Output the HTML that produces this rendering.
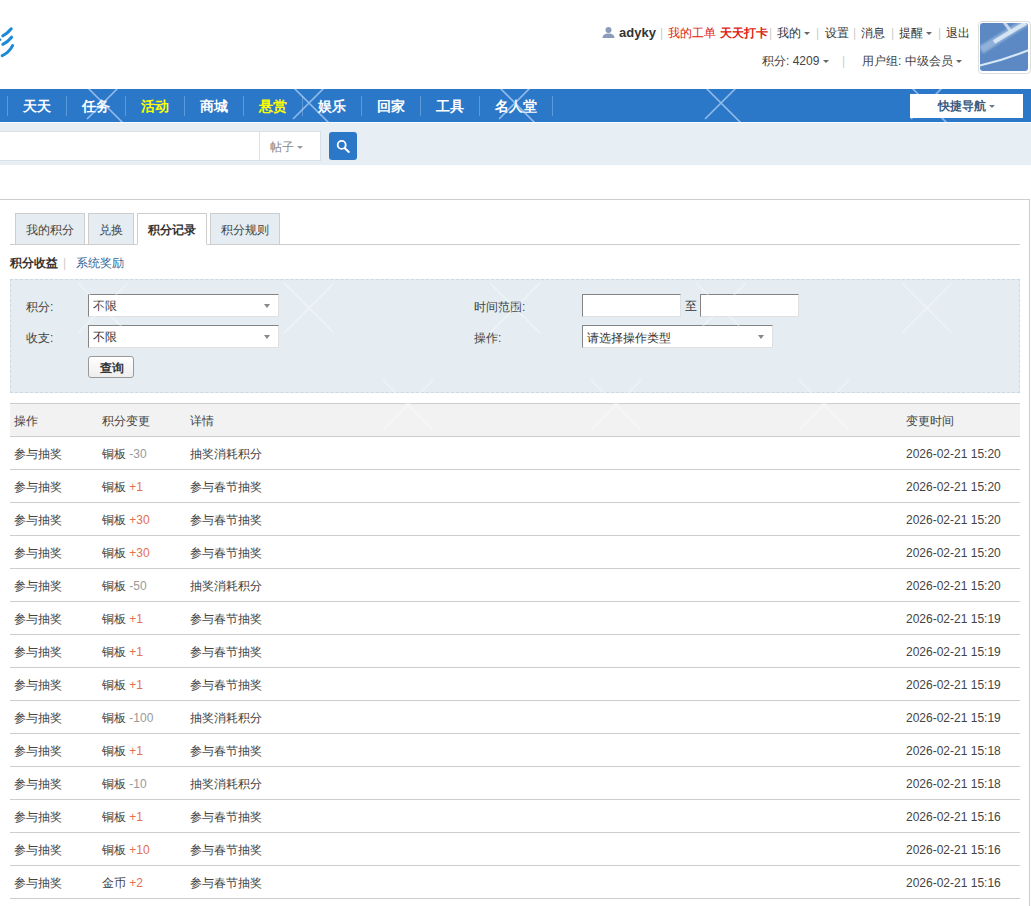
<!DOCTYPE html>
<html><head><meta charset="utf-8">
<style>
*{margin:0;padding:0;box-sizing:border-box}
html,body{width:1031px;height:906px;overflow:hidden;background:#fff}
body{font-family:"Liberation Sans",sans-serif;font-size:12px;color:#444;position:relative}
.a{position:absolute;white-space:nowrap;line-height:12px}
.caret{display:inline-block;width:0;height:0;border-left:3px solid transparent;border-right:3px solid transparent;border-top:3px solid #666;vertical-align:middle}
/* header */
#nav{position:absolute;left:0;top:89px;width:1031px;height:33px;background:#2b78c9}
#nav .sep{position:absolute;top:7px;width:1px;height:20px;background:#5a9ad8}
#nav .it{position:absolute;top:10px;font-size:14px;font-weight:bold;color:#fff;line-height:14px}
#srch{position:absolute;left:0;top:122px;width:1031px;height:43px;background:#e7eef4;border-top:1px solid #f6fbfd}
#content{position:absolute;left:-20px;top:199px;width:1050px;height:800px;border:1px solid #cdcdcd;background:#fff}
.tab{position:absolute;top:213px;height:32px;border:1px solid #cdcdcd;background:#e5edf2;color:#444;text-align:center;line-height:32px}
.tab.on{background:#fff;border-bottom-color:#fff;font-weight:bold;color:#333}
.px{position:absolute;background:#fff;border:1px solid;border-color:#848484 #e0e0e0 #e0e0e0 #848484}
.row{position:absolute;left:10px;width:1010px;height:33px;border-bottom:1px solid #cdcdcd}
.row span{position:absolute;top:11px;line-height:12px}
.g{color:#999}.r{color:#e4704f}
</style></head><body>

<!-- logo strokes -->
<svg class="a" style="left:0;top:0" width="30" height="70">
<g stroke="#1a8ad6" stroke-width="3" stroke-linecap="round" fill="none">
<path d="M2.8 35.8 Q7.5 33.5 11.2 28.8"/>
<path d="M2.8 44.3 Q7.8 42 11.6 37.2"/>
<path d="M2.2 55.6 Q9 52.5 12.6 45.6"/>
<path d="M-2 40.3 L0.3 39.7" stroke-width="2.4"/>
</g>
</svg>
<!-- user bar -->
<svg class="a" style="left:602px;top:27px" width="13" height="11" viewBox="0 0 13 11">
<circle cx="6.5" cy="3" r="3" fill="#8a9cb9"/>
<path d="M0.5 11 Q0.5 6.5 6.5 6.5 Q12.5 6.5 12.5 11Z" fill="#8a9cb9"/>
</svg>
<div class="a" style="left:619px;top:27px;font-weight:bold;color:#333;font-size:13px">adyky</div>
<div class="a" style="left:660px;top:27px;color:#ccc">|</div>
<div class="a" style="left:668px;top:27px;color:#d21">我的工单</div>
<div class="a" style="left:720px;top:27px;color:#d21;font-weight:bold">天天打卡</div>
<div class="a" style="left:769px;top:27px;color:#ccc">|</div>
<div class="a" style="left:777px;top:27px;color:#333">我的 <span class="caret"></span></div>
<div class="a" style="left:816px;top:27px;color:#ccc">|</div>
<div class="a" style="left:825px;top:27px;color:#333">设置</div>
<div class="a" style="left:853px;top:27px;color:#ccc">|</div>
<div class="a" style="left:861px;top:27px;color:#333">消息</div>
<div class="a" style="left:891px;top:27px;color:#ccc">|</div>
<div class="a" style="left:899px;top:27px;color:#333">提醒 <span class="caret"></span></div>
<div class="a" style="left:938px;top:27px;color:#ccc">|</div>
<div class="a" style="left:946px;top:27px;color:#333">退出</div>

<div class="a" style="left:762px;top:55px;color:#444">积分: 4209 <span class="caret"></span></div>
<div class="a" style="left:842px;top:55px;color:#ccc">|</div>
<div class="a" style="left:862px;top:55px;color:#444">用户组: 中级会员 <span class="caret"></span></div>

<!-- avatar -->
<div class="a" style="left:978px;top:21px;width:53px;height:53px;border:1px solid #ddd;border-radius:4px;background:#fff"></div>
<svg class="a" style="left:980px;top:23px" width="48" height="48" viewBox="0 0 48 48">
<defs><filter id="bl" x="-20%" y="-20%" width="140%" height="140%"><feGaussianBlur stdDeviation="1"/></filter>
<filter id="bl2" x="-20%" y="-20%" width="140%" height="140%"><feGaussianBlur stdDeviation="0.7"/></filter>
<clipPath id="ac"><rect width="48" height="48" rx="3"/></clipPath></defs>
<g clip-path="url(#ac)">
<rect width="48" height="48" fill="#5c89c3"/>
<path d="M1 27 Q20 15 46 -1" stroke="#b4cfea" stroke-width="8" fill="none" opacity="0.6" filter="url(#bl)"/>
<path d="M14 19 Q30 9 46 0" stroke="#e2eef8" stroke-width="4" fill="none" opacity="0.85" filter="url(#bl2)"/>
<path d="M24 -1 L32 10" stroke="#dbe8f3" stroke-width="3" fill="none" opacity="0.8" filter="url(#bl2)"/>
<path d="M-1 42.8 Q24 37 49 27" stroke="#d6e7f5" stroke-width="2" fill="none" filter="url(#bl2)"/>
</g>
</svg>

<!-- nav -->
<div id="nav">
<div class="sep" style="left:7px"></div>
<div class="it" style="left:23px;color:#fff">天天</div>
<div class="sep" style="left:66px"></div>
<div class="it" style="left:82px;color:#fff">任务</div>
<div class="sep" style="left:125px"></div>
<div class="it" style="left:141px;color:#ff0">活动</div>
<div class="sep" style="left:184px"></div>
<div class="it" style="left:200px;color:#fff">商城</div>
<div class="sep" style="left:243px"></div>
<div class="it" style="left:259px;color:#ff0">悬赏</div>
<div class="sep" style="left:302px"></div>
<div class="it" style="left:318px;color:#fff">娱乐</div>
<div class="sep" style="left:361px"></div>
<div class="it" style="left:377px;color:#fff">回家</div>
<div class="sep" style="left:420px"></div>
<div class="it" style="left:436px;color:#fff">工具</div>
<div class="sep" style="left:479px"></div>
<div class="it" style="left:495px;color:#fff">名人堂</div>
<div class="sep" style="left:552px"></div>
<div style="position:absolute;left:910px;top:5px;width:113px;height:24px;background:#fff"></div>
<div class="it" style="left:938px;top:11px;font-size:12px;line-height:12px;color:#3b5b80">快捷导航 <span class="caret" style="border-top-color:#6a7a8a"></span></div>
</div>

<div id="srch">
<div style="position:absolute;left:-10px;top:8px;width:331px;height:30px;border:1px solid #d9e1e8;background:#fff"></div>
<div style="position:absolute;left:259px;top:9px;width:1px;height:28px;background:#e0e0e0"></div>
<div class="a" style="left:270px;top:18px;color:#888">帖子 <span class="caret" style="border-top-color:#999"></span></div>
<div style="position:absolute;left:329px;top:9px;width:28px;height:28px;background:#2b78c9;border-radius:3px"></div>
<svg style="position:absolute;left:329px;top:9px" width="28" height="28" viewBox="0 0 28 28"><circle cx="12.7" cy="12.9" r="4" stroke="#fff" stroke-width="1.8" fill="none"/><path d="M15.6 15.9 L19.8 19.9" stroke="#fff" stroke-width="2.1" stroke-linecap="round"/></svg>
</div>
<div id="content"></div>
<div style="position:absolute;left:10px;top:244px;width:1010px;height:1px;background:#cdcdcd"></div>
<div class="tab" style="left:15px;width:70px">我的积分</div>
<div class="tab" style="left:88px;width:46px">兑换</div>
<div class="tab on" style="left:137px;width:70px">积分记录</div>
<div class="tab" style="left:210px;width:70px">积分规则</div>
<div class="a" style="left:10px;top:257px;font-weight:bold;color:#333">积分收益</div>
<div class="a" style="left:63px;top:257px;color:#ccc">|</div>
<div class="a" style="left:76px;top:257px;color:#336699">系统奖励</div>
<div style="position:absolute;left:10px;top:279px;width:1010px;height:114px;border:1px dashed #c9d9e5;background:#e5edf2"></div>
<div class="a" style="left:26px;top:301px">积分:</div>
<div class="a" style="left:26px;top:332px">收支:</div>
<div class="px" style="left:88px;top:294px;width:191px;height:23px"><span class="a" style="left:4px;top:5px;color:#333">不限</span><span class="caret" style="position:absolute;left:175px;top:9px;border-top-color:#888;border-width:4px 3.5px 0"></span></div>
<div class="px" style="left:88px;top:325px;width:191px;height:23px"><span class="a" style="left:4px;top:5px;color:#333">不限</span><span class="caret" style="position:absolute;left:175px;top:9px;border-top-color:#888;border-width:4px 3.5px 0"></span></div>
<div style="position:absolute;left:88px;top:356px;width:46px;height:22px;border:1px solid #999;border-radius:3px;background:linear-gradient(#fff,#eee)"></div>
<div class="a" style="left:100px;top:362px;font-weight:bold;color:#333">查询</div>
<div class="a" style="left:474px;top:301px">时间范围:</div>
<div class="a" style="left:474px;top:332px">操作:</div>
<div class="px" style="left:582px;top:294px;width:99px;height:23px"></div>
<div class="a" style="left:685px;top:300px;color:#333">至</div>
<div class="px" style="left:700px;top:294px;width:99px;height:23px"></div>
<div class="px" style="left:582px;top:325px;width:191px;height:23px"><span class="a" style="left:4px;top:6px;color:#333">请选择操作类型</span><span class="caret" style="position:absolute;left:175px;top:9px;border-top-color:#888;border-width:4px 3.5px 0"></span></div>
<div style="position:absolute;left:10px;top:403px;width:1010px;height:34px;border-top:1px solid #cdcdcd;border-bottom:1px solid #cdcdcd;background:#f2f2f2"></div>
<div class="a" style="left:14px;top:415px">操作</div>
<div class="a" style="left:102px;top:415px">积分变更</div>
<div class="a" style="left:190px;top:415px">详情</div>
<div class="a" style="left:906px;top:415px">变更时间</div>
<div class="row" style="top:437px"><span style="left:4px">参与抽奖</span><span style="left:92px">铜板 <i class="g" style="font-style:normal">-30</i></span><span style="left:180px">抽奖消耗积分</span><span style="left:896px">2026-02-21 15:20</span></div>
<div class="row" style="top:470px"><span style="left:4px">参与抽奖</span><span style="left:92px">铜板 <i class="r" style="font-style:normal">+1</i></span><span style="left:180px">参与春节抽奖</span><span style="left:896px">2026-02-21 15:20</span></div>
<div class="row" style="top:503px"><span style="left:4px">参与抽奖</span><span style="left:92px">铜板 <i class="r" style="font-style:normal">+30</i></span><span style="left:180px">参与春节抽奖</span><span style="left:896px">2026-02-21 15:20</span></div>
<div class="row" style="top:536px"><span style="left:4px">参与抽奖</span><span style="left:92px">铜板 <i class="r" style="font-style:normal">+30</i></span><span style="left:180px">参与春节抽奖</span><span style="left:896px">2026-02-21 15:20</span></div>
<div class="row" style="top:569px"><span style="left:4px">参与抽奖</span><span style="left:92px">铜板 <i class="g" style="font-style:normal">-50</i></span><span style="left:180px">抽奖消耗积分</span><span style="left:896px">2026-02-21 15:20</span></div>
<div class="row" style="top:602px"><span style="left:4px">参与抽奖</span><span style="left:92px">铜板 <i class="r" style="font-style:normal">+1</i></span><span style="left:180px">参与春节抽奖</span><span style="left:896px">2026-02-21 15:19</span></div>
<div class="row" style="top:635px"><span style="left:4px">参与抽奖</span><span style="left:92px">铜板 <i class="r" style="font-style:normal">+1</i></span><span style="left:180px">参与春节抽奖</span><span style="left:896px">2026-02-21 15:19</span></div>
<div class="row" style="top:668px"><span style="left:4px">参与抽奖</span><span style="left:92px">铜板 <i class="r" style="font-style:normal">+1</i></span><span style="left:180px">参与春节抽奖</span><span style="left:896px">2026-02-21 15:19</span></div>
<div class="row" style="top:701px"><span style="left:4px">参与抽奖</span><span style="left:92px">铜板 <i class="g" style="font-style:normal">-100</i></span><span style="left:180px">抽奖消耗积分</span><span style="left:896px">2026-02-21 15:19</span></div>
<div class="row" style="top:734px"><span style="left:4px">参与抽奖</span><span style="left:92px">铜板 <i class="r" style="font-style:normal">+1</i></span><span style="left:180px">参与春节抽奖</span><span style="left:896px">2026-02-21 15:18</span></div>
<div class="row" style="top:767px"><span style="left:4px">参与抽奖</span><span style="left:92px">铜板 <i class="g" style="font-style:normal">-10</i></span><span style="left:180px">抽奖消耗积分</span><span style="left:896px">2026-02-21 15:18</span></div>
<div class="row" style="top:800px"><span style="left:4px">参与抽奖</span><span style="left:92px">铜板 <i class="r" style="font-style:normal">+1</i></span><span style="left:180px">参与春节抽奖</span><span style="left:896px">2026-02-21 15:16</span></div>
<div class="row" style="top:833px"><span style="left:4px">参与抽奖</span><span style="left:92px">铜板 <i class="r" style="font-style:normal">+10</i></span><span style="left:180px">参与春节抽奖</span><span style="left:896px">2026-02-21 15:16</span></div>
<div class="row" style="top:866px"><span style="left:4px">参与抽奖</span><span style="left:92px">金币 <i class="r" style="font-style:normal">+2</i></span><span style="left:180px">参与春节抽奖</span><span style="left:896px">2026-02-21 15:16</span></div>

<svg style="position:absolute;left:0;top:0;pointer-events:none" width="1031" height="906">
<defs><clipPath id="cn"><path clip-rule="evenodd" d="M0 89H1031V122H0Z M910 94H1023V118H910Z"/></clipPath></defs>
<g clip-path="url(#cn)" stroke="rgb(205,228,255)" stroke-width="1.6" stroke-opacity="0.62" fill="none">
<path d="M78 78L128 128M128 78L87 119"/>
<path d="M284 78L334 128M334 78L293 119"/>
<path d="M490 78L540 128M540 78L499 119"/>
<path d="M696 78L746 128M746 78L705 119"/>
<path d="M902 78L952 128M952 78L911 119"/>
</g><g stroke="#fff" stroke-width="1.5" stroke-opacity="0.4" fill="none">
<path d="M284 283L334 333M334 283L284 333"/>
<path d="M78 283L128 333M128 283L78 333"/>
<path d="M696 283L746 333M746 283L696 333"/>
<path d="M383 380L433 430M433 380L383 430"/>
<path d="M591 380L641 430M641 380L591 430"/>
<path d="M490 283L540 333M540 283L490 333"/>
<path d="M902 283L952 333M952 283L902 333"/>
<path d="M799 380L849 430M849 380L799 430"/>
</g></svg>
</body></html>
